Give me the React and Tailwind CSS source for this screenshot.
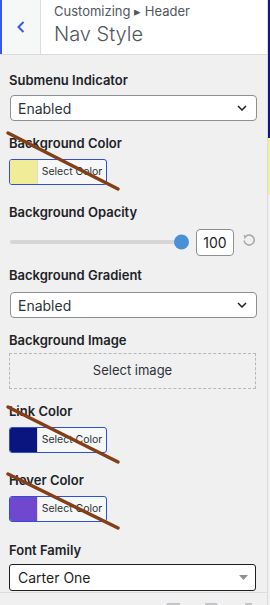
import React from "react";

const font = { fontFamily: "Inter, 'Liberation Sans', sans-serif" };

function Label({ children }) {
  return (
    <div className="h-[18px] leading-[18px] text-[13px] font-semibold text-[#1d2327]">{children}</div>
  );
}

function Chevron() {
  return (
    <svg width="10" height="6" viewBox="0 0 10 6" className="absolute right-[9px] top-1/2 -translate-y-1/2">
      <path d="M1 1 L5 5 L9 1" fill="none" stroke="#1e1e1e" strokeWidth="1.5" />
    </svg>
  );
}

function Select({ value }) {
  return (
    <div className="relative h-[26px] ml-[1px] w-[247px] rounded-[4px] border border-[#8c8f94] bg-white flex items-center pl-[7px] text-[14px] text-[#2c3338]">
      {value}
      <Chevron />
    </div>
  );
}

function ColorBtn({ color }) {
  return (
    <div className="flex h-[26px] w-[98px] rounded-[3px] border border-[#2f4fd8] overflow-hidden bg-[#f6f7f7]">
      <div className="w-[27px] h-full" style={{ background: color }} />
      <div className="flex-1 flex items-center justify-center text-[10.5px] text-[#2c3338] border-l border-[#dcdcde]">Select Color</div>
    </div>
  );
}

export default function App() {
  return (
    <div className="relative w-[270px] h-[605px] overflow-hidden flex bg-[#f0f0f1]" style={font}>
      <div className="w-[268px] h-full border-r border-[#dcdcde] flex flex-col bg-[#f0f0f1]">
        <div className="h-[55px] flex border-b border-[#dcdcde] bg-white shrink-0">
          <div className="w-[41px] h-full bg-[#f6f7f7] border-l-2 border-[#3858e9] border-r border-r-[#dcdcde] flex items-center justify-center">
            <svg width="10" height="14" viewBox="0 0 10 14">
              <path d="M7.5 2 L2.5 7 L7.5 12" fill="none" stroke="#3858e9" strokeWidth="2" />
            </svg>
          </div>
          <div className="pl-[13px] pt-[3px]">
            <div className="text-[13px] leading-[17px] text-[#50575e]">Customizing ▸ Header</div>
            <div className="text-[20px] leading-[28px] mt-0 text-[#50575e] font-light">Nav Style</div>
          </div>
        </div>

        <div className="px-[9px]">
          <div className="mt-[16px]">
            <Label>Submenu Indicator</Label>
            <div className="mt-[6px]"><Select value="Enabled" /></div>
          </div>
          <div className="mt-[13px]">
            <Label>Background Color</Label>
            <div className="mt-[7px]"><ColorBtn color="#f0ec97" /></div>
          </div>
          <div className="mt-[18px]">
            <Label>Background Opacity</Label>
            <div className="mt-[8px] h-[26px] flex items-center">
              <div className="relative ml-[1px] w-[172px] h-[4px] bg-[#d6d6d6] rounded-full">
                <div className="absolute right-[-7px] top-1/2 -translate-y-1/2 w-[15px] h-[15px] rounded-full bg-[#4a90d9]" />
              </div>
              <div className="ml-[14px] w-[38px] h-[27px] rounded-[4px] border border-[#8c8f94] bg-white flex items-center justify-center text-[14px] text-[#1d2327]">100</div>
              <svg width="14" height="14" viewBox="0 0 14 14" className="ml-[8px] -mt-[4px]">
                <path d="M4 3.2 A5 5 0 1 1 2.2 7.5" fill="none" stroke="#a7aaad" strokeWidth="1.6" />
                <path d="M1.5 1.5 L4.8 3.4 L2.6 6.2 Z" fill="#a7aaad" />
              </svg>
            </div>
          </div>
          <div className="mt-[11px]">
            <Label>Background Gradient</Label>
            <div className="mt-[8px]"><Select value="Enabled" /></div>
          </div>
          <div className="mt-[13px]">
            <Label>Background Image</Label>
            <div className="mt-[4px] h-[36px] w-[247px] border border-dashed border-[#b4b9be] flex items-center justify-center text-[13px] text-[#2c3338]">Select image</div>
          </div>
          <div className="mt-[13px]">
            <Label>Link Color</Label>
            <div className="mt-[7px]"><ColorBtn color="#0a1580" /></div>
          </div>
          <div className="mt-[18px]">
            <Label>Hover Color</Label>
            <div className="mt-[7px]"><ColorBtn color="#7048cf" /></div>
          </div>
          <div className="mt-[19px]">
            <Label>Font Family</Label>
            <div className="mt-[5px] relative h-[27px] w-[247px] rounded-[3px] border border-[#1e1e1e] bg-white flex items-center pl-[8px] text-[14px] text-[#1e1e1e]">
              Carter One
              <svg width="9" height="6" viewBox="0 0 9 6" className="absolute right-[7px] top-1/2 -translate-y-1/2">
                <path d="M0 0 L9 0 L4.5 5 Z" fill="#8c8f94" />
              </svg>
            </div>
          </div>
        </div>

        <div className="mt-auto h-[13px] border-t border-[#dcdcde] bg-[#f0f0f1] relative">
          <div className="absolute left-[167px] top-[10px] w-[13px] h-[4px] bg-[#c3c4c7]" />
          <div className="absolute left-[205px] top-[10px] w-[12px] h-[4px] bg-[#c3c4c7]" />
          <div className="absolute left-[245px] top-[10px] w-[7px] h-[4px] bg-[#c3c4c7]" />
        </div>
      </div>
      <div className="w-[2px] h-full flex flex-col">
        <div className="h-[138px] bg-[#15138a]" />
        <div className="h-[57px] bg-[#f5f08f]" />
        <div className="flex-1 bg-[#f0f0f1]" />
      </div>

      <svg className="absolute left-0 top-0 pointer-events-none" width="270" height="605">
        <line x1="8" y1="133" x2="118" y2="189" stroke="#853f17" strokeWidth="3.5" strokeLinecap="round" />
        <line x1="8" y1="407" x2="118" y2="462" stroke="#853f17" strokeWidth="3.5" strokeLinecap="round" />
        <line x1="8" y1="474" x2="118" y2="528" stroke="#853f17" strokeWidth="3.5" strokeLinecap="round" />
      </svg>
    </div>
  );
}
